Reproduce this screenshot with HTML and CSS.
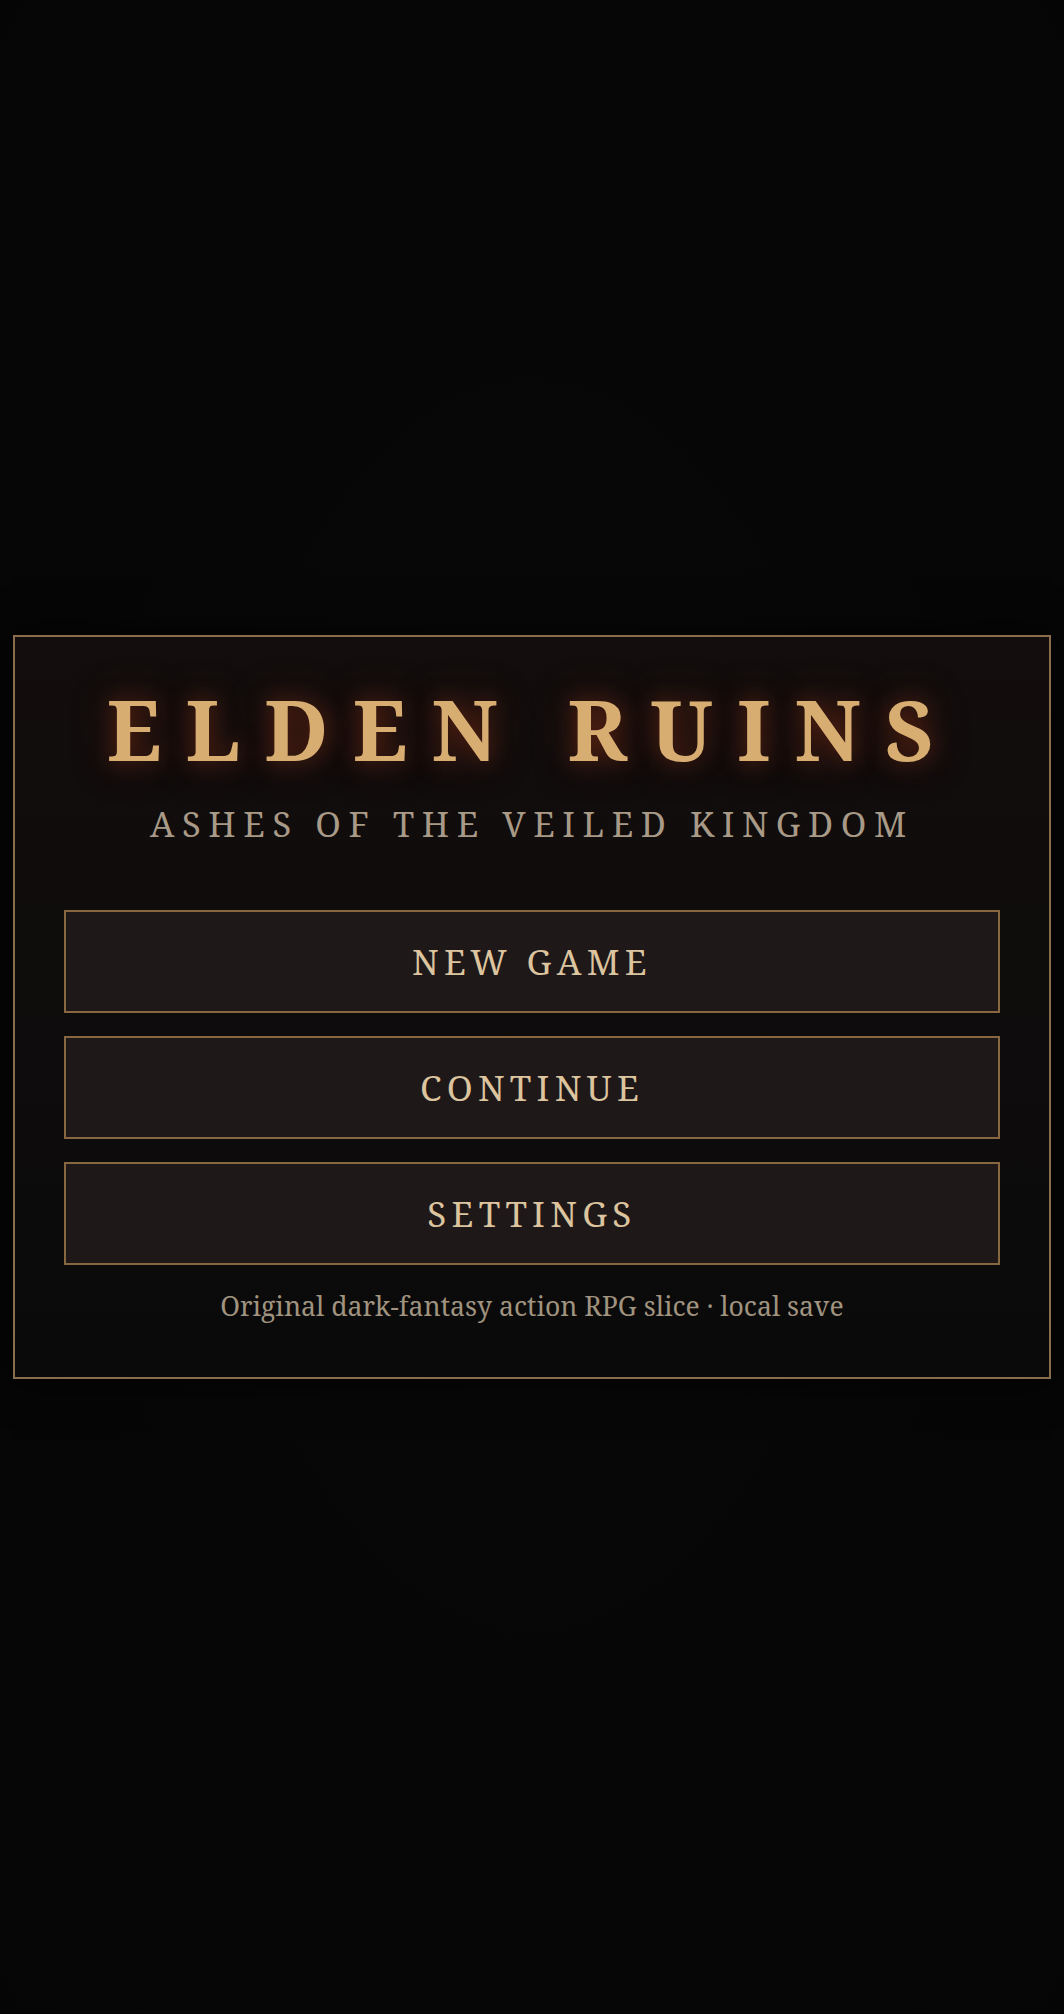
FILE: index.html
```html
<!DOCTYPE html>
<html lang="en">
<head>
<meta charset="utf-8">
<title>Elden Ruins</title>
<link rel="stylesheet" href="styles.css">
</head>
<body>
<main class="screen">
  <section class="panel">
    <h1 class="title">ELDEN RUINS</h1>
    <p class="subtitle">ASHES OF THE VEILED KINGDOM</p>
    <nav class="menu">
      <button class="menu-btn" type="button">NEW GAME</button>
      <button class="menu-btn" type="button">CONTINUE</button>
      <button class="menu-btn" type="button">SETTINGS</button>
    </nav>
    <p class="footnote">Original dark-fantasy action RPG slice · local save</p>
  </section>
</main>
</body>
</html>
```
FILE: styles.css
```css
html, body {
  margin: 0;
  padding: 0;
  height: 100%;
}
body {
  background: #060606;
  font-family: "Noto Serif", "DejaVu Serif", serif;
}
.screen {
  min-height: 100vh;
  display: flex;
  align-items: center;
  justify-content: center;
  padding: 0 13px;
  box-sizing: border-box;
  background: radial-gradient(ellipse at 50% 50%, #0a0909 0%, #060606 60%, #050505 100%);
}
.panel {
  width: 100%;
  box-sizing: border-box;
  border: 2px solid #8a6e4c;
  background: linear-gradient(180deg, #130e0d 0%, #0f0c0c 40%, #0a0a0a 100%);
  box-shadow: 0 0 40px rgba(0, 0, 0, 0.8);
  padding: 46px 49px 53px;
  text-align: center;
}
.title {
  margin: 0;
  font-size: 84px;
  font-weight: 700;
  line-height: 1.1;
  letter-spacing: 0.285em;
  color: #d8ad72;
  text-shadow: 0 0 22px rgba(150, 55, 25, 0.55), 0 0 44px rgba(110, 35, 20, 0.35);
}
.subtitle {
  margin: 27px 0 0;
  font-size: 34.5px;
  font-weight: 400;
  letter-spacing: 0.22em;
  padding-left: 0;
  color: #a89a87;
  line-height: 1.3;
}
.menu {
  display: flex;
  flex-direction: column;
  gap: 23px;
  margin-top: 63px;
}
.menu-btn {
  display: block;
  width: 100%;
  height: 103px;
  background: #1f1819;
  border: 2px solid #87673f;
  color: #dcc49f;
  font-family: inherit;
  font-size: 35px;
  letter-spacing: 0.15em;
  padding: 0;
  cursor: pointer;
}
.footnote {
  margin: 24px 0 0;
  font-size: 26.6px;
  color: #a0937f;
  line-height: 1.3;
}
```
